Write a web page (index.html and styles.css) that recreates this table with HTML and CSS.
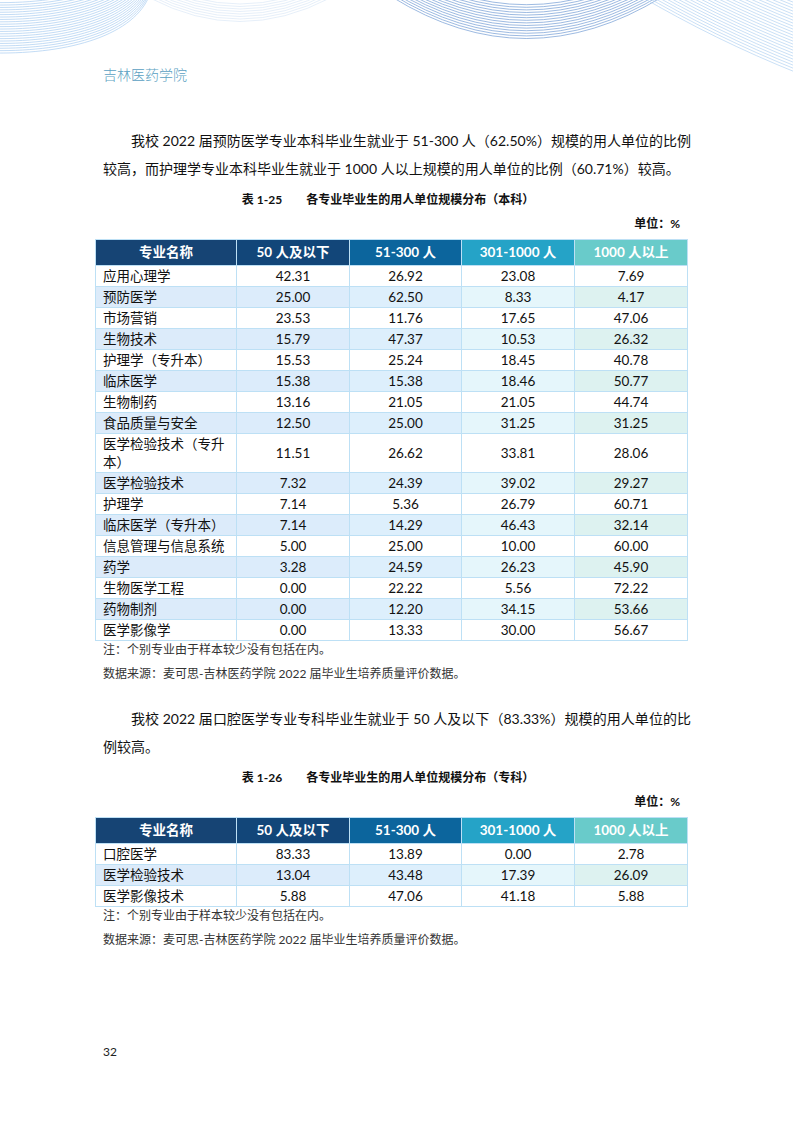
FILE: index.html
```html
<!DOCTYPE html>
<html lang="zh-CN">
<head>
<meta charset="utf-8">
<title>吉林医药学院</title>
<link rel="stylesheet" href="styles.css">
</head>
<body>
<div class="page">
  <svg class="deco" width="793" height="110" viewBox="0 0 793 110" aria-hidden="true">
    <defs>
      <path id="lw" d="M -5 53 C 70 54, 135 35, 150 -6"/>
      <path id="fw" d="M 150 -2 Q 240 45 330 -2"/>
      <path id="cw" d="M 392 -3 Q 526 80 662 -3"/>
      <path id="rw" d="M 640 -4 C 690 25, 740 50, 800 74"/>
    </defs>
    <g class="g-left">
      <use href="#lw" y="0"/><use href="#lw" y="-2.4"/><use href="#lw" y="-4.8"/><use href="#lw" y="-7.2"/>
      <use href="#lw" y="-9.6"/><use href="#lw" y="-12"/><use href="#lw" y="-14.4"/><use href="#lw" y="-16.8"/>
      <use href="#lw" y="-19.2"/><use href="#lw" y="-21.6"/><use href="#lw" y="-24"/><use href="#lw" y="-26.4"/>
      <use href="#lw" y="-28.8"/><use href="#lw" y="-31.2"/><use href="#lw" y="-33.6"/><use href="#lw" y="-36"/>
      <use href="#lw" y="-38.4"/><use href="#lw" y="-40.8"/><use href="#lw" y="-43.2"/><use href="#lw" y="-45.6"/>
      <use href="#lw" y="-48"/><use href="#lw" y="-50.4"/>
    </g>
    <g class="g-faint">
      <use href="#fw" y="0"/><use href="#fw" y="-2.5"/><use href="#fw" y="-5"/><use href="#fw" y="-7.5"/>
      <use href="#fw" y="-10"/><use href="#fw" y="-12.5"/><use href="#fw" y="-15"/><use href="#fw" y="-17.5"/>
    </g>
    <g class="g-center">
      <use href="#cw" y="0"/><use href="#cw" y="-2.6"/><use href="#cw" y="-5.2"/><use href="#cw" y="-7.8"/>
      <use href="#cw" y="-10.4"/><use href="#cw" y="-13"/><use href="#cw" y="-15.6"/><use href="#cw" y="-18.2"/>
      <use href="#cw" y="-20.8"/><use href="#cw" y="-23.4"/><use href="#cw" y="-26"/><use href="#cw" y="-28.6"/>
      <use href="#cw" y="-31.2"/><use href="#cw" y="-33.8"/>
    </g>
    <g class="g-right">
      <use href="#rw" y="0"/><use href="#rw" y="-3"/><use href="#rw" y="-6"/><use href="#rw" y="-9"/>
      <use href="#rw" y="-12"/><use href="#rw" y="-15"/><use href="#rw" y="-18"/><use href="#rw" y="-21"/>
      <use href="#rw" y="-24"/><use href="#rw" y="-27"/><use href="#rw" y="-30"/><use href="#rw" y="-33"/>
      <use href="#rw" y="-36"/><use href="#rw" y="-39"/><use href="#rw" y="-42"/><use href="#rw" y="-45"/>
      <use href="#rw" y="-48"/><use href="#rw" y="-51"/><use href="#rw" y="-54"/><use href="#rw" y="-57"/>
      <use href="#rw" y="-60"/><use href="#rw" y="-63"/><use href="#rw" y="-66"/><use href="#rw" y="-69"/>
    </g>
  </svg>

  <main class="content">
    <div class="school">吉林医药学院</div>

    <p class="para p1">我校 2022 届预防医学专业本科毕业生就业于 51-300 人（62.50%）规模的用人单位的比例较高，而护理学专业本科毕业生就业于 1000 人以上规模的用人单位的比例（60.71%）较高。</p>

    <div class="caption"><span class="cap-no">表 1-25</span>各专业毕业生的用人单位规模分布（本科）</div>
    <div class="unit">单位：%</div>

    <table class="data">
      <thead>
        <tr><th class="c1">专业名称</th><th class="c2">50 人及以下</th><th class="c3">51-300 人</th><th class="c4">301-1000 人</th><th class="c5">1000 人以上</th></tr>
      </thead>
      <tbody>
        <tr><td class="c1">应用心理学</td><td class="c2">42.31</td><td class="c3">26.92</td><td class="c4">23.08</td><td class="c5">7.69</td></tr>
        <tr class="alt"><td class="c1">预防医学</td><td class="c2">25.00</td><td class="c3">62.50</td><td class="c4">8.33</td><td class="c5">4.17</td></tr>
        <tr><td class="c1">市场营销</td><td class="c2">23.53</td><td class="c3">11.76</td><td class="c4">17.65</td><td class="c5">47.06</td></tr>
        <tr class="alt"><td class="c1">生物技术</td><td class="c2">15.79</td><td class="c3">47.37</td><td class="c4">10.53</td><td class="c5">26.32</td></tr>
        <tr><td class="c1">护理学（专升本）</td><td class="c2">15.53</td><td class="c3">25.24</td><td class="c4">18.45</td><td class="c5">40.78</td></tr>
        <tr class="alt"><td class="c1">临床医学</td><td class="c2">15.38</td><td class="c3">15.38</td><td class="c4">18.46</td><td class="c5">50.77</td></tr>
        <tr><td class="c1">生物制药</td><td class="c2">13.16</td><td class="c3">21.05</td><td class="c4">21.05</td><td class="c5">44.74</td></tr>
        <tr class="alt"><td class="c1">食品质量与安全</td><td class="c2">12.50</td><td class="c3">25.00</td><td class="c4">31.25</td><td class="c5">31.25</td></tr>
        <tr><td class="c1 wrap">医学检验技术（专升<br>本）</td><td class="c2">11.51</td><td class="c3">26.62</td><td class="c4">33.81</td><td class="c5">28.06</td></tr>
        <tr class="alt"><td class="c1">医学检验技术</td><td class="c2">7.32</td><td class="c3">24.39</td><td class="c4">39.02</td><td class="c5">29.27</td></tr>
        <tr><td class="c1">护理学</td><td class="c2">7.14</td><td class="c3">5.36</td><td class="c4">26.79</td><td class="c5">60.71</td></tr>
        <tr class="alt"><td class="c1">临床医学（专升本）</td><td class="c2">7.14</td><td class="c3">14.29</td><td class="c4">46.43</td><td class="c5">32.14</td></tr>
        <tr><td class="c1">信息管理与信息系统</td><td class="c2">5.00</td><td class="c3">25.00</td><td class="c4">10.00</td><td class="c5">60.00</td></tr>
        <tr class="alt"><td class="c1">药学</td><td class="c2">3.28</td><td class="c3">24.59</td><td class="c4">26.23</td><td class="c5">45.90</td></tr>
        <tr><td class="c1">生物医学工程</td><td class="c2">0.00</td><td class="c3">22.22</td><td class="c4">5.56</td><td class="c5">72.22</td></tr>
        <tr class="alt"><td class="c1">药物制剂</td><td class="c2">0.00</td><td class="c3">12.20</td><td class="c4">34.15</td><td class="c5">53.66</td></tr>
        <tr><td class="c1">医学影像学</td><td class="c2">0.00</td><td class="c3">13.33</td><td class="c4">30.00</td><td class="c5">56.67</td></tr>
      </tbody>
    </table>
    <div class="note">注：个别专业由于样本较少没有包括在内。</div>
    <div class="note source">数据来源：麦可思-吉林医药学院 2022 届毕业生培养质量评价数据。</div>

    <p class="para p2">我校 2022 届口腔医学专业专科毕业生就业于 50 人及以下（83.33%）规模的用人单位的比例较高。</p>

    <div class="caption"><span class="cap-no">表 1-26</span>各专业毕业生的用人单位规模分布（专科）</div>
    <div class="unit">单位：%</div>

    <table class="data">
      <thead>
        <tr><th class="c1">专业名称</th><th class="c2">50 人及以下</th><th class="c3">51-300 人</th><th class="c4">301-1000 人</th><th class="c5">1000 人以上</th></tr>
      </thead>
      <tbody>
        <tr><td class="c1">口腔医学</td><td class="c2">83.33</td><td class="c3">13.89</td><td class="c4">0.00</td><td class="c5">2.78</td></tr>
        <tr class="alt"><td class="c1">医学检验技术</td><td class="c2">13.04</td><td class="c3">43.48</td><td class="c4">17.39</td><td class="c5">26.09</td></tr>
        <tr><td class="c1">医学影像技术</td><td class="c2">5.88</td><td class="c3">47.06</td><td class="c4">41.18</td><td class="c5">5.88</td></tr>
      </tbody>
    </table>
    <div class="note">注：个别专业由于样本较少没有包括在内。</div>
    <div class="note source">数据来源：麦可思-吉林医药学院 2022 届毕业生培养质量评价数据。</div>
  </main>

  <footer class="pageno">32</footer>
</div>
</body>
</html>
```

FILE: styles.css
```css
* { box-sizing: border-box; }

html, body {
  margin: 0;
  padding: 0;
  background: #ffffff;
}

body {
  font-family: Lato, "Noto Sans CJK SC", sans-serif;
  color: #1a1a1a;
}

.page {
  position: relative;
  width: 793px;
  min-height: 1122px;
  display: flex;
  flex-direction: column;
  overflow: hidden;
}

.deco {
  position: absolute;
  left: 0;
  top: 0;
  pointer-events: none;
}

.deco use { fill: none; }

.g-left use { stroke: #a9cdf0; stroke-width: 0.7; }
.g-faint use { stroke: #dbe8f7; stroke-width: 0.7; }
.g-center use { stroke: #6593cf; stroke-width: 0.8; opacity: 0.8; }
.g-right use { stroke: #b3d3f2; stroke-width: 0.7; }

.content {
  position: relative;
  margin-left: 95px;
  width: 596px;
}

.school {
  padding: 66px 0 0 8px;
  font-size: 14px;
  line-height: 18px;
  font-weight: 300;
  color: #5a9fc2;
}

.para {
  margin: 0;
  padding-left: 8px;
  font-size: 14px;
  line-height: 28px;
  text-indent: 28px;
  text-align: justify;
  color: #111;
}

.p1 { margin-top: 43px; }
.p2 { margin-top: 22px; }

.caption {
  margin-top: 7px;
  font-size: 12px;
  line-height: 20px;
  font-weight: 700;
  text-align: center;
  color: #111;
  padding-right: 10px;
}

.cap-no { margin-right: 24px; }

.unit {
  margin-top: 5px;
  padding-right: 11px;
  font-size: 12px;
  line-height: 18px;
  font-weight: 700;
  text-align: right;
  color: #111;
}

.data {
  margin-top: 6px;
  width: 592px;
  border-collapse: collapse;
  table-layout: fixed;
  border: 1px solid #a9d6f1;
}

.data th,
.data td {
  padding: 0;
  border: 1px solid #bde0f5;
  text-align: center;
  white-space: nowrap;
}

.data th {
  font-size: 13.5px;
  line-height: 25px;
  font-weight: 700;
  color: #ffffff;
}

.data td {
  font-size: 13.5px;
  line-height: 20px;
  color: #111;
}

.data th.c1, .data td.c1 { width: 141px; }
.data th.c2, .data td.c2 { width: 113px; }
.data th.c3, .data td.c3 { width: 112px; }
.data th.c4, .data td.c4 { width: 113px; }
.data th.c5, .data td.c5 { width: 113px; }

.data td.c1 {
  text-align: left;
  padding-left: 7px;
}

.data td.wrap {
  white-space: normal;
  line-height: 18px;
  padding-top: 1px;
  padding-bottom: 1px;
}

th.c1 { background: #164474; }
th.c2 { background: #124679; }
th.c3 { background: #0c659d; }
th.c4 { background: #25a3c7; }
th.c5 { background: #69cbca; }

tr.alt td.c1 { background: #dcebfa; }
tr.alt td.c2 { background: #dcecfb; }
tr.alt td.c3 { background: #ddeffc; }
tr.alt td.c4 { background: #e5f6fb; }
tr.alt td.c5 { background: #ddf2f0; }

.note {
  padding-left: 8px;
  font-size: 12px;
  line-height: 18px;
  color: #333;
}

.note.source { margin-top: 6px; }

.pageno {
  margin-top: auto;
  padding: 0 0 61px 103px;
  font-size: 12px;
  line-height: 18px;
  color: #222;
}
```
